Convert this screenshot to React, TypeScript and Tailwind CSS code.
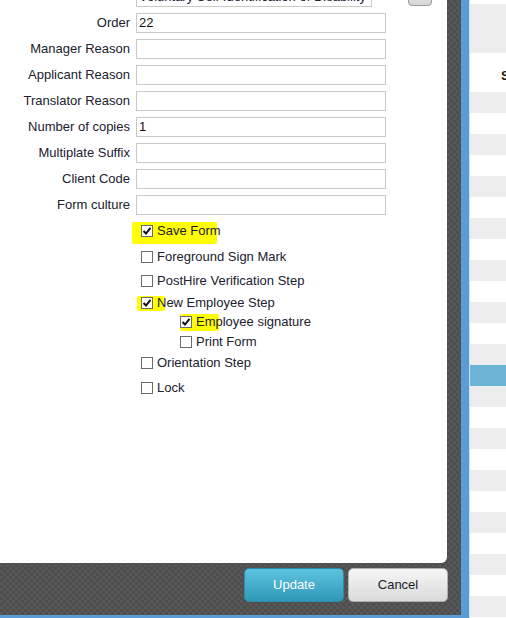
import React from "react";

type Field = { label: string; value?: string };

const fields: Field[] = [
  { label: "Order", value: "22" },
  { label: "Manager Reason" },
  { label: "Applicant Reason" },
  { label: "Translator Reason" },
  { label: "Number of copies", value: "1" },
  { label: "Multiplate Suffix" },
  { label: "Client Code" },
  { label: "Form culture" },
];

type Check = {
  label: string;
  checked?: boolean;
  indent?: boolean;
  mt: string;
  mark?: string;
};

const checks: Check[] = [
  { label: "Save Form", checked: true, mt: "mt-0", mark: "left-[-9px] top-[1px] w-[85px] h-[22px]" },
  { label: "Foreground Sign Mark", mt: "mt-[7px]" },
  { label: "PostHire Verification Step", mt: "mt-[5px]" },
  { label: "New Employee Step", checked: true, mt: "mt-[3px]", mark: "left-[-4px] top-[3px] w-[28px] h-[15px]" },
  { label: "Employee signature", checked: true, indent: true, mt: "mt-0", mark: "left-0 top-[2px] w-[39px] h-[17px]" },
  { label: "Print Form", indent: true, mt: "mt-[1px]" },
  { label: "Orientation Step", mt: "mt-[2px]" },
  { label: "Lock", mt: "mt-[6px]" },
];

function Box({ checked }: { checked?: boolean }) {
  return (
    <span className="relative flex h-[12px] w-[12px] shrink-0 items-center justify-center border border-[#6b6b6b] bg-white">
      {checked && (
        <svg width="10" height="10" viewBox="0 0 10 10">
          <path d="M1.5 5 L4 7.5 L8.5 1.8" fill="none" stroke="#111" strokeWidth="2" />
        </svg>
      )}
    </span>
  );
}

function CheckRow({ c }: { c: Check }) {
  return (
    <div className={`relative flex h-[19px] items-center ${c.mt} ${c.indent ? "pl-[180px]" : "pl-[141px]"}`}>
      <div className="relative flex items-center">
        {c.mark && <span className={`absolute rounded-[2px] bg-[#ffff00] ${c.mark}`} />}
        <Box checked={c.checked} />
        <span className="relative ml-[4px] leading-[19px]">{c.label}</span>
      </div>
    </div>
  );
}

export default function App() {
  return (
    <div className="flex h-[618px] w-[506px] overflow-hidden bg-white font-['Liberation_Sans',Arial,sans-serif] text-[13px] text-[#20202e]">
      <div className="flex w-[469px] flex-col">
        <div className="flex flex-1">
          <div className="flex w-[461px] flex-col bg-[#535353] bg-[repeating-conic-gradient(#4d4d4d_0_25%,#585858_0_50%)] bg-[length:6px_6px]">
            <div className="h-[563px] w-[447px] overflow-hidden rounded-br-[6px] bg-white">
              <div className="-mt-[14px] grid grid-cols-[130px_250px] gap-x-[6px] gap-y-[6px]">
                <div className="text-right leading-[20px]">Name</div>
                <div className="flex items-end">
                  <div className="h-[20px] w-[236px] shrink-0 overflow-hidden whitespace-nowrap border border-[#c8c8c8] pl-[2px] leading-[18px]">
                    Voluntary Self Identification of Disability
                  </div>
                  <div className="mb-[1px] ml-[36px] h-[20px] w-[24px] shrink-0 rounded-[4px] border border-[#9a9a9a] bg-gradient-to-b from-[#f2f2f2] to-[#d6d6d6]" />
                </div>
                {fields.map((f) => (
                  <React.Fragment key={f.label}>
                    <div className="whitespace-nowrap text-right leading-[20px]">{f.label}</div>
                    <div className="h-[20px] border border-[#c8c8c8] pl-[2px] leading-[18px] text-[#111]">
                      {f.value}
                    </div>
                  </React.Fragment>
                ))}
              </div>
              <div className="mt-[6px] flex flex-col">
                {checks.map((c) => (
                  <CheckRow key={c.label} c={c} />
                ))}
              </div>
            </div>
            <div className="flex justify-end gap-[4px] pr-[13px] pt-[5px]">
              <button className="h-[34px] w-[100px] rounded-[5px] border border-[#2b8cab] bg-gradient-to-b from-[#5cc3df] to-[#2f98b8] text-[13px] text-white">
                Update
              </button>
              <button className="h-[34px] w-[100px] rounded-[5px] border border-[#b0b0b0] bg-gradient-to-b from-[#f6f6f6] to-[#dadada] text-[13px] text-[#1c1c2a]">
                Cancel
              </button>
            </div>
          </div>
          <div className="w-[8px] bg-[#5b9cd6]" />
        </div>
        <div className="h-[3px] bg-[#5b9cd6]" />
      </div>
      <div className="flex flex-1 flex-col border-l border-[#d5dde6]">
        <div className="mt-[4px] h-[49px] bg-[#ededed]" />
        <div className="h-[39px] pl-[31px] pt-[16px] font-bold leading-[13px] text-[#1a1a1a]">S</div>
        {Array.from({ length: 25 }).map((_, i) => (
          <div
            key={i}
            className={`h-[21px] shrink-0 ${i === 13 ? "bg-[#6db5d7]" : i % 2 === 0 ? "bg-[#ededed]" : "bg-white"}`}
          />
        ))}
      </div>
    </div>
  );
}
